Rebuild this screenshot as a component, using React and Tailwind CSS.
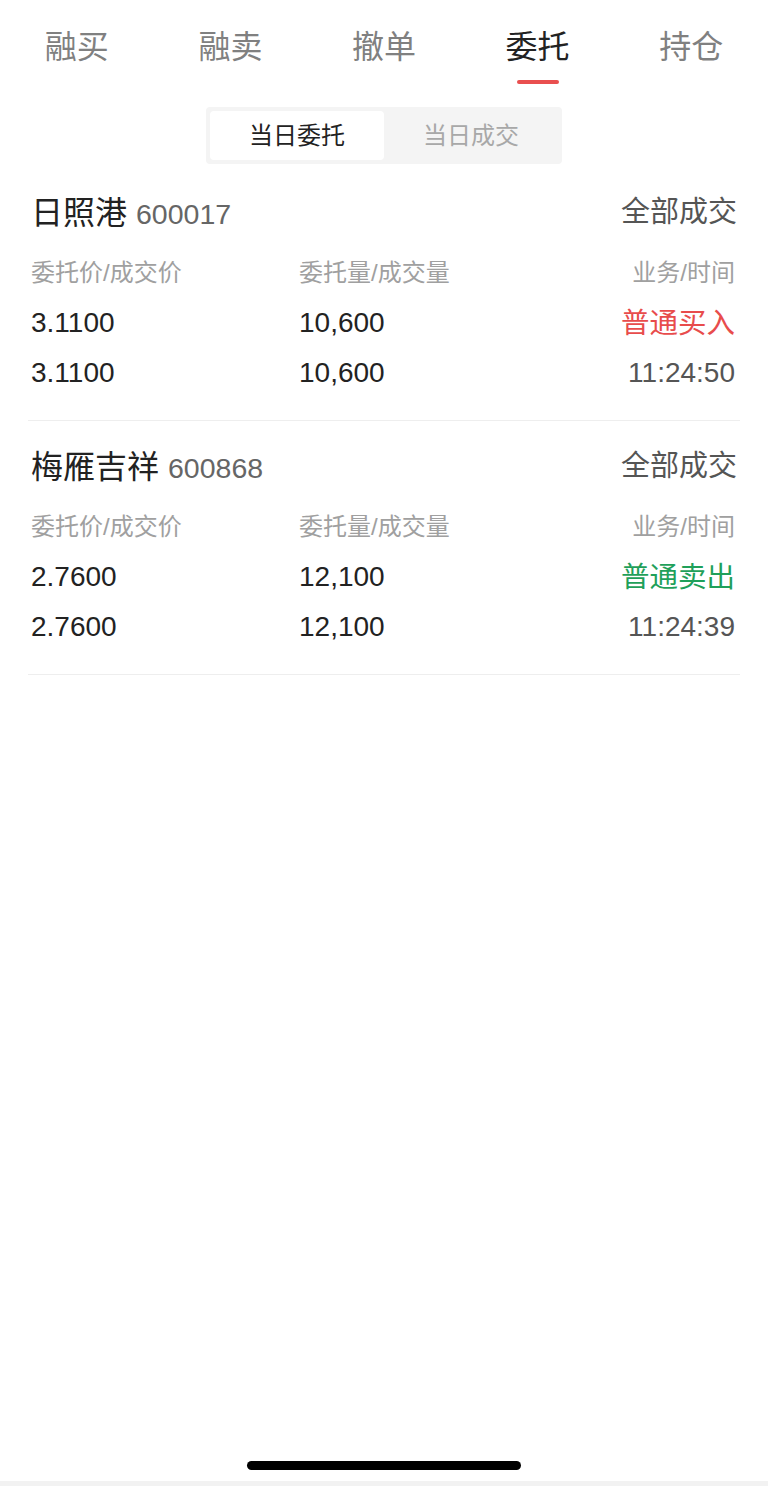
import React from "react";

const tabs = ["融买", "融卖", "撤单", "委托", "持仓"];

const orders = [
  {
    name: "日照港",
    code: "600017",
    status: "全部成交",
    price: "3.1100",
    qty: "10,600",
    biz: "普通买入",
    bizColor: "text-[#e84c4c]",
    time: "11:24:50",
  },
  {
    name: "梅雁吉祥",
    code: "600868",
    status: "全部成交",
    price: "2.7600",
    qty: "12,100",
    biz: "普通卖出",
    bizColor: "text-[#1fa05a]",
    time: "11:24:39",
  },
];

function OrderCard({ o }) {
  return (
    <div className="mx-[28px] border-b border-[#eeeeee] pb-[22px] pt-[26px]">
      <div className="h-[40px] mb-[15px] flex items-center justify-between pl-[3px] pr-[3px]">
        <div className="flex items-baseline gap-[9px]">
          <span className="text-[32px] text-[#222222]">{o.name}</span>
          <span className="text-[28.5px] text-[#666666]">{o.code}</span>
        </div>
        <span className="text-[29px] text-[#555555]">{o.status}</span>
      </div>
      <div className="grid grid-cols-[268px_1fr_auto] pl-[3px] pr-[5px]">
        <div className="h-[50px] flex items-center text-[24px] text-[#a0a0a0]">委托价/成交价</div>
        <div className="h-[50px] flex items-center text-[24px] text-[#a0a0a0]">委托量/成交量</div>
        <div className="h-[50px] flex items-center justify-end text-[24px] text-[#a0a0a0]">业务/时间</div>

        <div className="h-[50px] flex items-center text-[28px] text-[#222222]">{o.price}</div>
        <div className="h-[50px] flex items-center text-[28px] text-[#222222]">{o.qty}</div>
        <div className={`h-[50px] flex items-center justify-end text-[28.5px] ${o.bizColor}`}>{o.biz}</div>

        <div className="h-[50px] flex items-center text-[28px] text-[#222222]">{o.price}</div>
        <div className="h-[50px] flex items-center text-[28px] text-[#222222]">{o.qty}</div>
        <div className="h-[50px] flex items-center justify-end text-[28px] text-[#555555]">{o.time}</div>
      </div>
    </div>
  );
}

export default function App() {
  return (
    <div className="w-[768px] h-[1486px] bg-white flex flex-col font-['Liberation_Sans','Noto_Sans_CJK_SC',sans-serif]">
      <div className="grid grid-cols-5 pt-[27px]">
        {tabs.map((t, i) => (
          <div key={t} className="flex flex-col items-center">
            <span className={`text-[32px] leading-[40px] ${i === 3 ? "text-[#222222]" : "text-[#808080]"}`}>{t}</span>
            <div className={`mt-[13px] w-[42px] h-[4px] rounded-full ${i === 3 ? "bg-[#e94f4f]" : "bg-transparent"}`} />
          </div>
        ))}
      </div>

      <div className="flex justify-center mt-[23px]">
        <div className="w-[356px] h-[57px] bg-[#f4f4f4] rounded-[4px] p-[4px] grid grid-cols-2">
          <div className="bg-white rounded-[4px] flex items-center justify-center text-[24px] text-[#222222]">当日委托</div>
          <div className="flex items-center justify-center text-[24px] text-[#a8a8a8]">当日成交</div>
        </div>
      </div>

      <div className="mt-[3px]">
        {orders.map((o) => (
          <OrderCard key={o.code} o={o} />
        ))}
      </div>

      <div className="flex-1" />
      <div className="flex justify-center mb-[11px]">
        <div className="w-[274px] h-[9px] rounded-full bg-black" />
      </div>
      <div className="h-[5px] bg-[#f2f2f2]" />
    </div>
  );
}
